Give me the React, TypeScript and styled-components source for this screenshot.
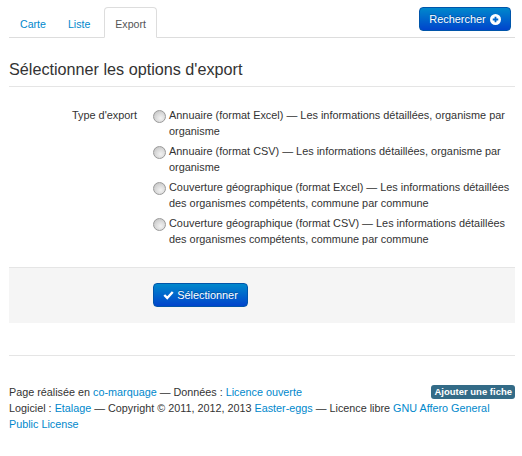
import React from 'react';
import styled, { createGlobalStyle } from 'styled-components';

const GlobalStyle = createGlobalStyle`
  html, body {
    margin: 0;
    padding: 0;
    background: #fff;
  }
  body {
    font-family: "Liberation Sans", Arial, sans-serif;
    font-size: 10.9px;
    line-height: 16px;
    color: #333;
  }
`;

const Page = styled.div`
  width: 522px;
  height: 456px;
  box-sizing: border-box;
  padding: 7px 7px 0 9px;
  overflow: hidden;
`;

const TabBar = styled.div`
  display: flex;
  align-items: flex-end;
  box-sizing: border-box;
  height: 31px;
  border-bottom: 1px solid #ddd;
`;

const Tab = styled.a<{ $active?: boolean }>`
  box-sizing: border-box;
  height: 31px;
  margin-bottom: -1px;
  padding: 8px 10px 0;
  margin-left: ${(p) => (p.$active ? '3px' : '0')};
  border: 1px solid ${(p) => (p.$active ? '#ddd' : 'transparent')};
  border-bottom-color: ${(p) => (p.$active ? '#fff' : 'transparent')};
  border-radius: 4px 4px 0 0;
  background: ${(p) => (p.$active ? '#fff' : 'transparent')};
  color: ${(p) => (p.$active ? '#555' : '#0088cc')};
  font-size: 10.6px;
`;

const SearchButton = styled.a`
  display: flex;
  align-items: center;
  justify-content: center;
  gap: 4px;
  box-sizing: border-box;
  width: 92px;
  height: 24px;
  margin-left: auto;
  margin-right: 4px;
  margin-bottom: 6px;
  border: 1px solid #0055aa;
  border-radius: 4px;
  background: linear-gradient(to bottom, #0088cc, #0044cc);
  color: #fff;
  text-shadow: 0 -1px 0 rgba(0, 0, 0, 0.25);
`;

const SelectButton = styled(SearchButton)`
  width: 95px;
  margin: 0;
  gap: 3px;
`;

const Legend = styled.h2`
  margin: 19px 0 0;
  height: 29px;
  box-sizing: content-box;
  border-bottom: 1px solid #e5e5e5;
  font-size: 16.2px;
  font-weight: normal;
  line-height: 24px;
  color: #333;
`;

const FormRow = styled.div`
  display: grid;
  grid-template-columns: 128px 1fr;
  column-gap: 16px;
  margin-top: 20px;
`;

const FieldLabel = styled.div`
  text-align: right;
`;

const Options = styled.div`
  display: flex;
  flex-direction: column;
  gap: 4px;
`;

const Option = styled.label`
  display: block;
  padding-left: 16px;
`;

const Radio = styled.input`
  appearance: none;
  float: left;
  box-sizing: border-box;
  width: 13px;
  height: 13px;
  margin: 3px 0 0 -16px;
  border: 1px solid #9a9a9a;
  border-radius: 50%;
  background: radial-gradient(circle at 60% 65%, #f2f2f2 0%, #dcdcdc 45%, #bdbdbd 100%);
`;

const Actions = styled.div`
  margin-top: 20px;
  height: 56px;
  box-sizing: border-box;
  padding: 15px 0 0 144px;
  border-top: 1px solid #e5e5e5;
  background: #f5f5f5;
`;

const Footer = styled.footer`
  margin-top: 32px;
  padding-top: 28px;
  border-top: 1px solid #e5e5e5;
  font-size: 10.8px;
`;

const Link = styled.a`
  color: #0088cc;
`;

const Badge = styled.a`
  float: right;
  margin-top: 1px;
  padding: 0 3px;
  height: 14px;
  border-radius: 3px;
  background: #336b87;
  color: #fff;
  font-size: 9.5px;
  font-weight: bold;
  line-height: 14px;
`;

const CirclePlus = () => (
  <svg width="11" height="11" viewBox="0 0 12 12" aria-hidden="true">
    <circle cx="6" cy="6" r="6" fill="#fff" />
    <path d="M6 3v6M3 6h6" stroke="#0066cc" strokeWidth="2" />
  </svg>
);

const Check = () => (
  <svg width="11" height="10" viewBox="0 0 13 11" aria-hidden="true">
    <path d="M1.5 5.5 5 9l6.5-7" fill="none" stroke="#fff" strokeWidth="2.8" />
  </svg>
);

const options = [
  'Annuaire (format Excel) — Les informations détaillées, organisme par organisme',
  'Annuaire (format CSV) — Les informations détaillées, organisme par organisme',
  'Couverture géographique (format Excel) — Les informations détaillées des organismes compétents, commune par commune',
  'Couverture géographique (format CSV) — Les informations détaillées des organismes compétents, commune par commune',
];

const App = () => (
  <Page>
    <GlobalStyle />
    <TabBar>
      <Tab>Carte</Tab>
      <Tab>Liste</Tab>
      <Tab $active>Export</Tab>
      <SearchButton>
        Rechercher <CirclePlus />
      </SearchButton>
    </TabBar>
    <Legend>Sélectionner les options d'export</Legend>
    <FormRow>
      <FieldLabel>Type d'export</FieldLabel>
      <Options>
        {options.map((text) => (
          <Option key={text}>
            <Radio type="radio" name="export" />
            {text}
          </Option>
        ))}
      </Options>
    </FormRow>
    <Actions>
      <SelectButton>
        <Check /> Sélectionner
      </SelectButton>
    </Actions>
    <Footer>
      <Badge>Ajouter une fiche</Badge>
      Page réalisée en <Link>co-marquage</Link> — Données : <Link>Licence ouverte</Link>
      <br />
      Logiciel : <Link>Etalage</Link> — Copyright © 2011, 2012, 2013 <Link>Easter-eggs</Link> — Licence libre{' '}
      <Link>GNU Affero General</Link> <Link>Public License</Link>
    </Footer>
  </Page>
);

export default App;
